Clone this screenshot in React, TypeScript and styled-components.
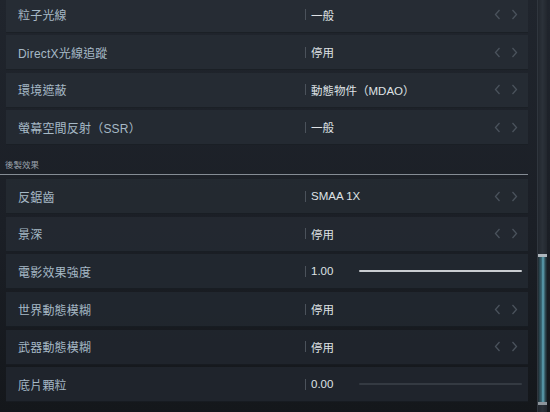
import React from "react";
import styled, { createGlobalStyle } from "styled-components";

const Global = createGlobalStyle`
  *, *::before, *::after { box-sizing: border-box; }
  html, body { margin: 0; padding: 0; }
  body {
    width: 550px; height: 412px; overflow: hidden;
    background: linear-gradient(180deg, #20252d 0%, #1b1f26 55%, #14171b 100%);
    font-family: "Liberation Sans", "Noto Sans CJK TC", sans-serif;
  }
`;

const Page = styled.div`
  display: flex;
  width: 550px;
  height: 412px;
  overflow: hidden;
`;

const Content = styled.div`
  flex: 0 0 522px;
  min-width: 0;
  margin-left: 6px;
  display: flex;
  flex-direction: column;
  margin-top: -2.5px;
`;

const Group = styled.div`
  display: flex;
  flex-direction: column;
  gap: 2.6px;
`;

const Row = styled.div<{ $shade: number }>`
  height: 35px;
  flex: 0 0 35px;
  display: flex;
  align-items: center;
  background: ${(p) => `rgba(${40 - p.$shade * 6}, ${46 - p.$shade * 6}, ${54 - p.$shade * 6}, 0.85)`};
  border-bottom: 1px solid rgba(10, 12, 15, 0.35);
`;

const Label = styled.div`
  flex: 0 0 299px;
  padding-left: 12px;
  color: #a6b9c6;
  font-size: 12px;
  letter-spacing: 0.2px;
`;

const Value = styled.div`
  flex: 1;
  min-width: 0;
  display: flex;
  align-items: center;
  height: 100%;
`;

const Divider = styled.span`
  flex: 0 0 1px;
  height: 11px;
  background: #4b525b;
  margin-right: 5px;
`;

const ValueText = styled.span<{ $w?: number }>`
  color: #dfe2e5;
  font-size: 11.5px;
  ${(p) => (p.$w ? `flex: 0 0 ${p.$w}px;` : "flex: 1;")}
`;

const Arrows = styled.div`
  display: flex;
  gap: 10px;
  margin-right: 10px;
  align-items: center;
`;

const Track = styled.div<{ $on: boolean }>`
  flex: 0 0 163px;
  height: 2px;
  border-radius: 1px;
  background: ${(p) => (p.$on ? "#c9cdd1" : "#343a42")};
`;

const Header = styled.div`
  height: 29px;
  display: flex;
  flex-direction: column;
  justify-content: flex-end;
  margin-left: -6px;
  margin-bottom: 4px;
  margin-top: 1px;
`;

const HeaderText = styled.div`
  color: #9ba3ad;
  font-size: 8.5px;
  padding-left: 5px;
  margin-bottom: 4px;
`;

const HeaderLine = styled.div`
  height: 1.5px;
  width: 528px;
  background: #858c94;
`;

const Scroll = styled.div`
  flex: 0 0 10px;
  margin-left: 9px;
  height: 412px;
  display: flex;
  flex-direction: column;
  background: linear-gradient(90deg, #22272e, #2b3139 50%, #22272e);
  border-left: 1px solid #30363e;
`;

const ScrollSpace = styled.div`
  flex: 0 0 254px;
`;

const Thumb = styled.div`
  flex: 0 0 151px;
  background: linear-gradient(90deg, #1f2a30 0%, #3a6876 40%, #5fa6b8 55%, #2f4c56 80%, #1c2429 100%);
  border-top: 3px solid #aeb6bd;
  border-bottom: 3px solid #8d959c;
`;

function Chevron({ dir }: { dir: "l" | "r" }) {
  return (
    <svg width="7" height="11" viewBox="0 0 7 11">
      <path
        d={dir === "l" ? "M5.5 1 L1.5 5.5 L5.5 10" : "M1.5 1 L5.5 5.5 L1.5 10"}
        fill="none"
        stroke="#4a525c"
        strokeWidth="1.3"
      />
    </svg>
  );
}

type Item = { label: string; value: string; slider?: boolean; on?: boolean };

const top: Item[] = [
  { label: "粒子光線", value: "一般" },
  { label: "DirectX光線追蹤", value: "停用" },
  { label: "環境遮蔽", value: "動態物件（MDAO）" },
  { label: "螢幕空間反射（SSR）", value: "一般" },
];

const post: Item[] = [
  { label: "反鋸齒", value: "SMAA 1X" },
  { label: "景深", value: "停用" },
  { label: "電影效果強度", value: "1.00", slider: true, on: true },
  { label: "世界動態模糊", value: "停用" },
  { label: "武器動態模糊", value: "停用" },
  { label: "底片顆粒", value: "0.00", slider: true, on: false },
];

function SettingRow({ item, shade }: { item: Item; shade: number }) {
  return (
    <Row $shade={shade}>
      <Label>{item.label}</Label>
      <Value>
        <Divider />
        {item.slider ? (
          <>
            <ValueText $w={48}>{item.value}</ValueText>
            <Track $on={!!item.on} />
          </>
        ) : (
          <>
            <ValueText>{item.value}</ValueText>
            <Arrows>
              <Chevron dir="l" />
              <Chevron dir="r" />
            </Arrows>
          </>
        )}
      </Value>
    </Row>
  );
}

export default function App() {
  return (
    <>
      <Global />
      <Page>
        <Content>
          <Group>
            {top.map((it, i) => (
              <SettingRow key={it.label} item={it} shade={i * 0.1} />
            ))}
          </Group>
          <Header>
            <HeaderText>後製效果</HeaderText>
            <HeaderLine />
          </Header>
          <Group>
            {post.map((it, i) => (
              <SettingRow key={it.label} item={it} shade={0.5 + i * 0.15} />
            ))}
          </Group>
        </Content>
        <Scroll>
          <ScrollSpace />
          <Thumb />
        </Scroll>
      </Page>
    </>
  );
}
